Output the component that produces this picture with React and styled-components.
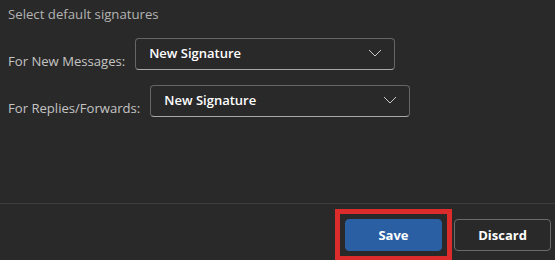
import React from "react";
import styled, { createGlobalStyle } from "styled-components";

const GlobalStyle = createGlobalStyle`
  html, body {
    margin: 0;
    padding: 0;
    background: #292929;
  }
  body {
    font-family: "Open Sans", "Noto Sans", Arial, sans-serif;
  }
`;

const signatureRows = [
  { label: "For New Messages:", value: "New Signature" },
  { label: "For Replies/Forwards:", value: "New Signature" },
];

function Chevron() {
  return (
    <svg width="14" height="8" viewBox="0 0 14 8">
      <polyline
        points="1,1 7,7 13,1"
        fill="none"
        stroke="#c8c8c8"
        strokeWidth="1"
      />
    </svg>
  );
}

export default function App() {
  return (
    <Page>
      <GlobalStyle />
      <Content>
        <Heading>Select default signatures</Heading>
        <Rows>
          {signatureRows.map((row) => (
            <Row key={row.label}>
              <Label>{row.label}</Label>
              <Dropdown type="button">
                <span>{row.value}</span>
                <Chevron />
              </Dropdown>
            </Row>
          ))}
        </Rows>
      </Content>
      <Footer>
        <Button primary highlighted>Save</Button>
        <Button>Discard</Button>
      </Footer>
    </Page>
  );
}

const Page = styled.div`
  width: 555px;
  height: 260px;
  display: flex;
  flex-direction: column;
  overflow: hidden;
  background: #292929;
  color: #d6d6d6;
`;

const Content = styled.div`
  flex: 1;
  padding: 4px 0 0 8px;
`;

const Heading = styled.div`
  font-size: 13.2px;
  line-height: 20px;
  color: #b3b3b3;
`;

const Rows = styled.div`
  display: flex;
  flex-direction: column;
  gap: 15px;
  margin-top: 14px;
`;

const Row = styled.div`
  display: flex;
  align-items: flex-end;
  gap: 10px;
`;

const Label = styled.span`
  font-size: 13.1px;
  line-height: 18px;
  color: #c4c4c4;
`;

const Dropdown = styled.button`
  width: 260px;
  height: 32px;
  box-sizing: border-box;
  display: flex;
  align-items: center;
  justify-content: space-between;
  padding: 0 12px 2px 13px;
  background: #292929;
  border: 1px solid #666666;
  border-bottom-color: #a8a8a8;
  border-radius: 4px;
  font-family: inherit;
  font-size: 13px;
  font-weight: 600;
  color: #ffffff;
  cursor: pointer;
`;

const Footer = styled.div`
  display: flex;
  justify-content: flex-end;
  gap: 12px;
  height: 57px;
  box-sizing: border-box;
  padding: 15px 4px 0 0;
  border-top: 1px solid #3e3e3e;
`;

const Button = styled.button`
  position: relative;
  width: 97px;
  height: 32px;
  box-sizing: border-box;
  border-radius: 4px;
  font-family: inherit;
  font-size: 13px;
  font-weight: 700;
  color: #ffffff;
  cursor: pointer;
  background: ${(p) => (p.primary ? "#2b5fa3" : "#292929")};
  border: 1px solid ${(p) => (p.primary ? "#2b5fa3" : "#6b6b6b")};

  &::after {
    content: "";
    display: ${(p) => (p.highlighted ? "block" : "none")};
    position: absolute;
    inset: -11px;
    border: 5px solid #dc2b2b;
    pointer-events: none;
  }
`;
